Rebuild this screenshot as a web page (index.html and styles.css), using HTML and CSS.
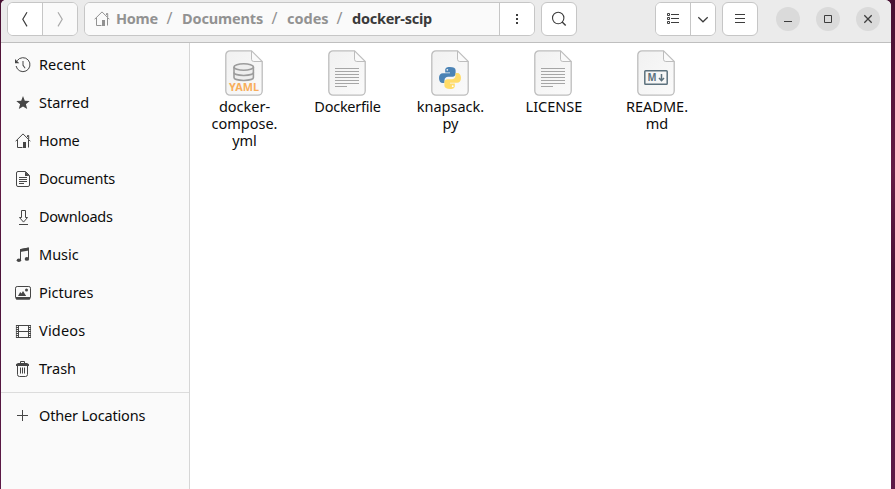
FILE: index.html
```html
<!DOCTYPE html>
<html lang="en">
<head>
<meta charset="utf-8">
<title>docker-scip</title>
<link rel="stylesheet" href="styles.css">
</head>
<body>
<svg width="0" height="0" class="defs" aria-hidden="true">
  <defs>
    <linearGradient id="paper" x1="0" y1="0" x2="1" y2="1"><stop offset="0" stop-color="#f1f1f1"/><stop offset="1" stop-color="#fafafa"/></linearGradient>
    <symbol id="sheet" viewBox="0 0 38 46">
      <path d="M5 .8H26.5L37.2 11.5V41a4.2 4.2 0 0 1-4.2 4.2H5A4.2 4.2 0 0 1 .8 41V5A4.2 4.2 0 0 1 5 .8Z" fill="url(#paper)" stroke="#bdbdbd" stroke-width="1.3"/>
      <path d="M26.5 1V9.2a2.3 2.3 0 0 0 2.3 2.3H37Z" fill="#fafafa" stroke="#bdbdbd"/>
    </symbol>
    <symbol id="lines" viewBox="0 0 38 46">
      <path d="M7 18.5H31M7 21.5H31M7 24.5H31M7 27.5H31M7 30.5H31M7 33.5H31M7 36.5H19" stroke="#a6a6a6"/>
    </symbol>
    <symbol id="home" viewBox="0 0 16 16">
      <path d="M.6 8.3 8 .9l7.4 7.4M2.5 7v7.5h5M13.5 7v7.5M12.5 4V2.5h1.2V6" fill="none" stroke="currentColor"/><path d="M8 9h3v6H8z" fill="currentColor"/>
    </symbol>
  </defs>
</svg>
<div class="window">
  <header class="bar">
    <div class="group nav">
      <button><svg width="16" height="16"><path d="M10 1.2 5.8 8.3 10 15.4" fill="none" stroke="#3d3d3d" stroke-width="1.2"/></svg></button>
      <button class="off"><svg width="16" height="16"><path d="M6 1.2 10.2 8.3 6 15.4" fill="none" stroke="#aaa" stroke-width="1.2"/></svg></button>
    </div>
    <div class="group path">
      <nav class="crumbs">
        <svg class="crumb-icon" width="16" height="16"><use href="#home"/></svg>
        <span class="crumb c-home">Home</span><i>/</i>
        <span class="crumb c-docs">Documents</span><i>/</i>
        <span class="crumb c-codes">codes</span><i>/</i>
        <span class="crumb current">docker-scip</span>
      </nav>
      <button class="dots"><svg width="16" height="16"><path d="M7 3h2v2H7zM7 7h2v2H7zM7 11h2v2H7z" fill="#3d3d3d"/></svg></button>
    </div>
    <button class="group single"><svg width="16" height="16"><circle cx="7.2" cy="7" r="5.7" fill="none" stroke="#3d3d3d" stroke-width="1.1"/><path d="m11.2 11 3.500 3.500" stroke="#3d3d3d" stroke-width="1.400"/></svg></button>
    <div class="group view">
      <button><svg width="16" height="16"><path d="M2.5 2.500h2v2h-2zM2.500 6.500h2v2h-2zM2.500 10.500h2v2h-2zM6 3.500h8M6 7.500h8M6 11.500h8" fill="none" stroke="#3d3d3d"/></svg></button>
      <button class="narrow"><svg width="16" height="16"><path d="m3.300 6.300 4.700 4.500 4.700-4.500" fill="none" stroke="#3d3d3d" stroke-width="1.200"/></svg></button>
    </div>
    <button class="group single menu"><svg width="16" height="16"><path d="M3 3.500h10M3 7.500h10M3 11.500h10" stroke="#3d3d3d"/></svg></button>
    <div class="controls">
      <button><svg width="16" height="16"><path d="M4 10.500h8" stroke="#3d3d3d"/></svg></button>
      <button><svg width="16" height="16"><path d="M4.500 4.500h7v7h-7z" fill="none" stroke="#3d3d3d"/></svg></button>
      <button><svg width="16" height="16"><path d="m4.300 4.300 7.400 7.400m0-7.400-7.400 7.400" stroke="#3d3d3d" stroke-width="1.300"/></svg></button>
    </div>
  </header>
  <main>
    <aside>
      <a class="row"><svg width="16" height="16"><path d="M2.200 3.700A7 7 0 1 1 1.100 9" fill="none" stroke="currentColor"/><path d="M0 2v4.200h4.300L2.800 4.700 1 3zM7.500 4h1v4l2 3-.7.500L7.500 8.500z" fill="currentColor"/></svg><span>Recent</span></a>
      <a class="row"><svg width="16" height="16"><path d="m8 1 1.800 4.700 4.900.3-3.800 3.200 1.300 4.900L8 11.400l-4.200 2.700 1.300-4.900L1.300 6l4.900-.3z" fill="currentColor"/></svg><span>Starred</span></a>
      <a class="row"><svg width="16" height="16"><use href="#home"/></svg><span class="snug">Home</span></a>
      <a class="row"><svg width="16" height="16"><path d="M3 .5h7.500L14.500 4.500V14a1.500 1.500 0 0 1-1.500 1.500H3A1.500 1.500 0 0 1 1.500 14V2A1.500 1.500 0 0 1 3 .5zM4 6.500h8M4 8.500h8M4 10.500h8M4 12.500h5" fill="none" stroke="currentColor"/><path d="M10 .5V5h4.500z" fill="currentColor"/></svg><span class="tight">Documents</span></a>
      <a class="row"><svg width="16" height="16"><path d="M6.500 1.500h4v7h2L8.500 13.100 4.500 8.500h2zM4 15.500h9" fill="none" stroke="currentColor"/></svg><span class="tight">Downloads</span></a>
      <a class="row"><svg width="16" height="16"><path d="M5.500 13V2.500L13.500 1v10.500" fill="none" stroke="currentColor"/><path d="M5 2.300 14 .6v3L5 5z" fill="currentColor"/><ellipse cx="3.900" cy="13.300" rx="2.200" ry="1.800" fill="currentColor"/><ellipse cx="11.900" cy="11.900" rx="2.200" ry="1.900" fill="currentColor"/></svg><span>Music</span></a>
      <a class="row"><svg width="16" height="16"><rect x=".5" y="1.500" width="15" height="12.500" rx="1.700" fill="none" stroke="currentColor"/><path d="M1 12h14v2.500H1zM3 11l2.200-4 1.300 1.600L8 6l3.200 5z" fill="currentColor"/><circle cx="11.500" cy="5" r="1.500" fill="currentColor"/></svg><span>Pictures</span></a>
      <a class="row"><svg width="16" height="16"><path d="M3.500 2v13M13.500 2v13M1 2.500h15M1 14.500h15M3 8.500h11" fill="none" stroke="currentColor"/><path d="M2 2v13M15 2v13" stroke="currentColor" stroke-width="2" stroke-dasharray="1 1"/><path d="M1.400 2v13M15.600 2v13" stroke="currentColor" stroke-width=".8"/></svg><span class="wide">Videos</span></a>
      <a class="row"><svg width="16" height="16"><path d="M2.500 4v9.500a2 2 0 0 0 2 2h6a2 2 0 0 0 2-2V4M5.500 6.500v6M7.500 6.500v6M9.500 6.500v6M5.500 2V.5h4V2" fill="none" stroke="currentColor"/><path d="M3 2h9l2 1.200V5H1V3.200z" fill="currentColor"/></svg><span>Trash</span></a>
      <hr>
      <a class="row"><svg width="16" height="16"><path d="M7.500 2v11M2 7.500h11" stroke="currentColor"/></svg><span class="snug">Other Locations</span></a>
    </aside>
    <section class="files">
      <figure>
        <svg width="38" height="46"><use href="#sheet"/><g fill="#eee" stroke="#9c9c9c" stroke-width="1.600"><path d="M9 17v10.500c0 1.700 4.200 3 9.700 3s9.700-1.300 9.700-3V17"/><path d="M9 22.500c0 1.700 4.200 3 9.700 3s9.700-1.300 9.700-3" fill="none"/><ellipse cx="18.700" cy="17" rx="9.700" ry="3.300"/></g><text class="yaml" x="4" y="41" textLength="30" lengthAdjust="spacingAndGlyphs">YAML</text></svg>
        <figcaption>docker-<br>compose.<br>yml</figcaption>
      </figure>
      <figure>
        <svg width="38" height="46"><use href="#sheet"/><use href="#lines"/></svg>
        <figcaption class="tight">Dockerfile</figcaption>
      </figure>
      <figure>
        <svg width="38" height="46"><use href="#sheet"/><g transform="translate(8 17)"><path d="M10.800 0C7 0 6.200 1.500 6.200 3.200v2.200H11v.8H4C1.500 6.200 0 8 0 11s1.400 5 3.700 5h1.800v-2.700c0-2 1.700-3.500 3.600-3.500h4.600c1.700 0 2.900-1.400 2.900-3V3.200C16.600 1.200 14.600 0 10.800 0Z" fill="#4b83b5"/><path d="M10.800 0C7 0 6.200 1.500 6.200 3.200v2.200H11v.8H4C1.500 6.200 0 8 0 11s1.400 5 3.700 5h1.800v-2.700c0-2 1.700-3.500 3.600-3.500h4.600c1.700 0 2.900-1.400 2.900-3V3.200C16.600 1.200 14.600 0 10.800 0Z" transform="rotate(180 11 11)" fill="#ffdc69"/><circle cx="8.300" cy="2.800" r=".9" fill="#eee"/><circle cx="13.700" cy="19.200" r=".9" fill="#fff"/></g></svg>
        <figcaption>knapsack.<br>py</figcaption>
      </figure>
      <figure>
        <svg width="38" height="46"><use href="#sheet"/><use href="#lines"/></svg>
        <figcaption class="shift">LICENSE</figcaption>
      </figure>
      <figure>
        <svg width="38" height="46"><use href="#sheet"/><rect x="7.800" y="20.800" width="22.400" height="13.400" rx=".8" fill="none" stroke="#5c717d" stroke-width="1.500"/><text class="md" x="10.500" y="31.200" textLength="9" lengthAdjust="spacingAndGlyphs">M</text><path d="M24.500 24v6M22 28l2.500 2.700L27 28" fill="none" stroke="#5c717d" stroke-width="1.500"/></svg>
        <figcaption class="shift">README.<br>md</figcaption>
      </figure>
    </section>
  </main>
</div>
</body>
</html>
```
FILE: styles.css
```css
* { box-sizing: border-box; }
body { margin: 0; height: 489px; overflow: hidden; padding: 0 4px 0 1px; background: linear-gradient(#481032, #641b45 35%, #4b1238 55%, #5d1a47); font: 14.5px/17px "Noto Sans", sans-serif; color: #0c0c0c; }
.defs { position: absolute; }
.window { height: 489px; display: flex; flex-direction: column; background: #fff; border-radius: 5px 6px 0 0; overflow: hidden; }
.bar { height: 43px; flex: none; display: flex; align-items: flex-start; padding: 2px 11px 0 6px; background: #ebebeb; border-bottom: 1px solid #bfbfbf; }
button { font: inherit; padding: 0; border: 0; background: #fff; display: flex; align-items: center; justify-content: center; }
svg { display: block; flex: none; }
.group { height: 34px; display: flex; border: 1px solid #c6c6c6; border-radius: 6px; overflow: hidden; background: #fff; }
.nav { width: 71px; margin-right: 6px; }
.nav button { flex: 1; }
.nav .off { border-left: 1px solid #c6c6c6; background: #fafafa; }
.path { width: 451px; margin-right: 6px; }
.crumbs { flex: 1; display: flex; align-items: center; background: #fafafa; padding-left: 9px; color: #929292; font-weight: 700; }
.crumb-icon { margin-right: 6px; }
.crumbs i { font-style: normal; font-weight: 400; font-size: 16px; width: 25px; padding-bottom: 2px; text-align: center; }
.crumb { white-space: nowrap; padding-bottom: 2px; }
.c-home { width: 41px; letter-spacing: -.3px; }
.c-docs { width: 80px; letter-spacing: -.15px; }
.c-codes { width: 40px; }
.current { color: #3a3a3a; letter-spacing: -.25px; }
.dots { width: 35px; border-left: 1px solid #c6c6c6; }
.single { width: 36px; align-items: center; }
.view { width: 61px; margin-left: 78px; margin-right: 6px; }
.view button { width: 34px; }
.view .narrow { width: 25px; border-left: 1px solid #c6c6c6; }
.controls { display: flex; gap: 16px; margin: 5px 0 0 18px; }
.controls button { width: 24px; height: 24px; border-radius: 50%; background: #dadada; }
main { flex: 1; display: flex; min-height: 0; }
aside { width: 189px; flex: none; background: #fafafa; border-right: 1px solid #d6d6d6; padding-top: 3px; }
.row { height: 38px; display: flex; align-items: center; gap: 8px; padding-left: 14px; color: #464646; }
.row span { color: #0c0c0c; white-space: nowrap; padding-bottom: 2px; }
.tight { letter-spacing: -.25px; }
.snug { letter-spacing: -.15px; }
.wide { letter-spacing: .2px; }
hr { border: 0; height: 1px; background: #dcdcdc; margin: 4px 0; }
.files { display: flex; align-items: flex-start; padding: 7px 0 0 3px; }
figure { margin: 0; width: 103px; display: flex; flex-direction: column; align-items: center; }
figure > svg { margin-right: 1px; }
figcaption { margin-top: 2px; text-align: center; white-space: nowrap; }
.shift { margin-left: 1px; }
.yaml { font: 700 10px "Noto Sans", sans-serif; fill: #f8ae5c; }
.md { font: 700 10px "Noto Sans", sans-serif; fill: #5c717d; }
```
